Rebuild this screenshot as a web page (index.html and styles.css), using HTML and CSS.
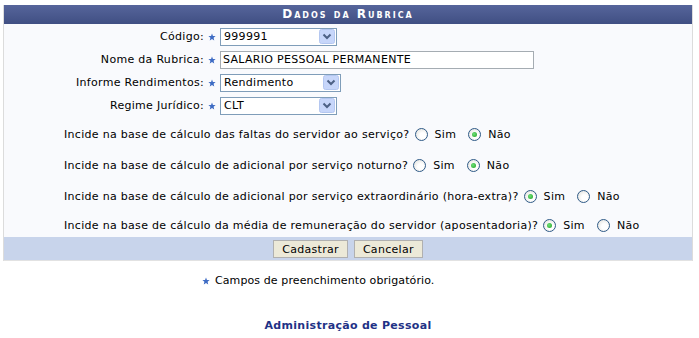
FILE: index.html
```html
<!DOCTYPE html>
<html>
<head>
  <meta charset="UTF-8">
  <title>Dados da Rubrica</title>
  <link rel="stylesheet" href="styles.css">
</head>
<body>
  <div class="form-box">
    <div class="caption">Dados da Rubrica</div>

    <div class="fields">
      <div class="field">
        <label class="lbl">Código:</label>
        <svg class="star" viewBox="0 0 10 10"><path d="M5 0.5 L6.2 3.6 L9.5 3.8 L7 5.9 L7.8 9.3 L5 7.5 L2.2 9.3 L3 5.9 L0.5 3.8 L3.8 3.6 Z"/></svg>
        <div class="select w117"><span>999991</span><svg class="drop" viewBox="0 0 16 15"><rect x="0.5" y="0.5" width="15" height="14" rx="2"/><path d="M4.5 5.5 L8 9 L11.5 5.5"/></svg></div>
      </div>
      <div class="field">
        <label class="lbl">Nome da Rubrica:</label>
        <svg class="star" viewBox="0 0 10 10"><path d="M5 0.5 L6.2 3.6 L9.5 3.8 L7 5.9 L7.8 9.3 L5 7.5 L2.2 9.3 L3 5.9 L0.5 3.8 L3.8 3.6 Z"/></svg>
        <input class="text" type="text" value="SALARIO PESSOAL PERMANENTE">
      </div>
      <div class="field">
        <label class="lbl">Informe Rendimentos:</label>
        <svg class="star" viewBox="0 0 10 10"><path d="M5 0.5 L6.2 3.6 L9.5 3.8 L7 5.9 L7.8 9.3 L5 7.5 L2.2 9.3 L3 5.9 L0.5 3.8 L3.8 3.6 Z"/></svg>
        <div class="select w121"><span>Rendimento</span><svg class="drop" viewBox="0 0 16 15"><rect x="0.5" y="0.5" width="15" height="14" rx="2"/><path d="M4.5 5.5 L8 9 L11.5 5.5"/></svg></div>
      </div>
      <div class="field">
        <label class="lbl">Regime Jurídico:</label>
        <svg class="star" viewBox="0 0 10 10"><path d="M5 0.5 L6.2 3.6 L9.5 3.8 L7 5.9 L7.8 9.3 L5 7.5 L2.2 9.3 L3 5.9 L0.5 3.8 L3.8 3.6 Z"/></svg>
        <div class="select w117"><span>CLT</span><svg class="drop" viewBox="0 0 16 15"><rect x="0.5" y="0.5" width="15" height="14" rx="2"/><path d="M4.5 5.5 L8 9 L11.5 5.5"/></svg></div>
      </div>
    </div>

    <div class="questions">
      <div class="q">
        <span class="q-text">Incide na base de cálculo das faltas do servidor ao serviço?</span>
        <label class="opt"><input type="radio" name="q1"> Sim</label>
        <label class="opt"><input type="radio" name="q1" checked> Não</label>
      </div>
      <div class="q">
        <span class="q-text">Incide na base de cálculo de adicional por serviço noturno?</span>
        <label class="opt"><input type="radio" name="q2"> Sim</label>
        <label class="opt"><input type="radio" name="q2" checked> Não</label>
      </div>
      <div class="q">
        <span class="q-text">Incide na base de cálculo de adicional por serviço extraordinário (hora-extra)?</span>
        <label class="opt"><input type="radio" name="q3" checked> Sim</label>
        <label class="opt"><input type="radio" name="q3"> Não</label>
      </div>
      <div class="q">
        <span class="q-text">Incide na base de cálculo da média de remuneração do servidor (aposentadoria)?</span>
        <label class="opt"><input type="radio" name="q4" checked> Sim</label>
        <label class="opt"><input type="radio" name="q4"> Não</label>
      </div>
    </div>

    <div class="actions">
      <button class="btn">Cadastrar</button>
      <button class="btn">Cancelar</button>
    </div>
  </div>

  <div class="required-note">
    <svg class="star" viewBox="0 0 10 10"><path d="M5 0.5 L6.2 3.6 L9.5 3.8 L7 5.9 L7.8 9.3 L5 7.5 L2.2 9.3 L3 5.9 L0.5 3.8 L3.8 3.6 Z"/></svg>
    Campos de preenchimento obrigatório.
  </div>

  <div class="module-link">Administração de Pessoal</div>
</body>
</html>
```

FILE: styles.css
```css
body {
  margin: 0;
  padding: 5px 0 0 3px;
  font-family: "DejaVu Sans", Verdana, sans-serif;
  font-size: 11px;
  letter-spacing: 0.3px;
  color: #000;
  background: #fff;
}
.form-box {
  width: 688px;
  border-left: 1px solid #dcdcdc;
  border-right: 1px solid #dcdcdc;
  background: #f9fafd;
}
.caption {
  height: 19px;
  line-height: 19px;
  background: linear-gradient(#56659b, #404f83);
  color: #fff;
  font-weight: bold;
  font-variant: small-caps;
  letter-spacing: 2px;
  text-align: center;
  font-size: 12px;
}
.fields {
  padding-top: 1px;
}
.field {
  display: flex;
  align-items: center;
  height: 23px;
}
.lbl {
  width: 200px;
  text-align: right;
}
.star {
  width: 8px;
  height: 8px;
  fill: #3e6cc4;
  margin: 0 4px 0 4px;
}
.select {
  display: flex;
  align-items: center;
  justify-content: space-between;
  box-sizing: border-box;
  height: 18px;
  border: 1px solid #7f9db9;
  background: #fff;
  padding: 0 1px 0 3px;
}
.w117 { width: 117px; }
.w121 { width: 121px; }
.drop {
  width: 16px;
  height: 15px;
}
.drop rect {
  fill: #c7d6fa;
  stroke: #b4c7f0;
}
.drop path {
  fill: none;
  stroke: #4d6185;
  stroke-width: 2;
}
.text {
  box-sizing: border-box;
  width: 314px;
  height: 18px;
  border: 1px solid #a5acb2;
  padding: 0 2px;
  margin: 0;
  font-family: inherit;
  font-size: 11px;
  letter-spacing: 0.3px;
  background: #fff;
}
.questions {
  padding-left: 60px;
  padding-top: 2px;
}
.q {
  display: flex;
  align-items: center;
  height: 31px;
}
.q:last-child {
  height: 25px;
  padding-top: 2px;
  box-sizing: border-box;
}
.q-text {
  margin-right: 5px;
}
.opt {
  display: flex;
  align-items: center;
  gap: 7px;
  margin-right: 12px;
}
.opt input {
  appearance: none;
  width: 13px;
  height: 13px;
  margin: 0;
  border: 1px solid #2f5a87;
  border-radius: 50%;
  background: radial-gradient(circle at 60% 60%, #ffffff 30%, #dcdcd7 100%);
  position: relative;
}
.opt input:checked::after {
  content: "";
  position: absolute;
  left: 3px;
  top: 3px;
  width: 5px;
  height: 5px;
  border-radius: 50%;
  background: radial-gradient(circle at 40% 40%, #6ee07a, #21a121);
}
.actions {
  display: flex;
  justify-content: center;
  gap: 6px;
  padding: 3px 0 2px;
  height: 18px;
  background: #c8d4eb;
  border-bottom: 1px solid #e2e2e2;
}
.btn {
  height: 18px;
  padding: 0 8px;
  font-family: inherit;
  font-size: 11px;
  letter-spacing: 0.3px;
  color: #000;
  background: #ece9d8;
  border: 1px solid #9d9d9d;
  border-color: #fff #7a7a7a #7a7a7a #fff;
  outline: 1px solid #b0b0b0;
  outline-offset: -1px;
}
.required-note {
  display: flex;
  align-items: center;
  margin: 13px 0 0 195px;
  letter-spacing: 0.1px;
}
.required-note .star {
  margin: 0 5px 0 4px;
}
.module-link {
  margin-top: 32px;
  width: 690px;
  text-align: center;
  font-weight: bold;
  color: #1f3286;
}
```
